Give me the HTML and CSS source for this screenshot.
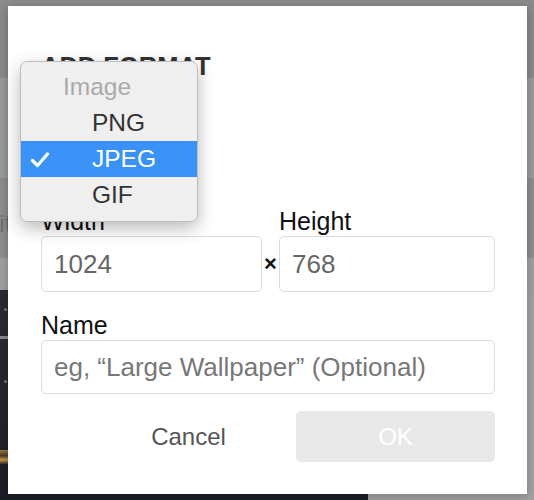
FILE: index.html
```html
<!DOCTYPE html>
<html>
<head>
<meta charset="utf-8">
<link rel="stylesheet" href="styles.css">
</head>
<body>
<div class="page">
  <div class="band band-top"></div>
  <div class="band band-toolbar"></div>
  <div class="band band-mid"><span class="peek">Edit</span></div>
  <div class="band band-light"></div>
  <div class="lower">
    <div class="photo">
      <div class="dot dot1"></div>
      <div class="streak"></div>
      <div class="dot dot2"></div>
      <div class="glow"></div>
    </div>
    <div class="rest"></div>
  </div>
</div>

<div class="dialog">
  <h1 class="title">ADD FORMAT</h1>
  <div class="size-row">
    <div class="field">
      <label class="label">Width</label>
      <input class="input" type="text" value="1024">
    </div>
    <span class="times">&times;</span>
    <div class="field">
      <label class="label">Height</label>
      <input class="input" type="text" value="768">
    </div>
  </div>
  <div class="field name-field">
    <label class="label">Name</label>
    <input class="input" type="text" placeholder="eg, “Large Wallpaper” (Optional)">
  </div>
  <div class="actions">
    <button class="btn btn-cancel">Cancel</button>
    <button class="btn btn-ok">OK</button>
  </div>
</div>

<div class="menu">
  <div class="menu-header">Image</div>
  <div class="menu-item">PNG</div>
  <div class="menu-item selected">
    <svg class="check" width="20" height="16" viewBox="0 0 20 16"><path d="M2.5 8.5 L7.5 13.5 L17.5 2" fill="none" stroke="#fff" stroke-width="3.2" stroke-linecap="round" stroke-linejoin="round"/></svg>
    JPEG
  </div>
  <div class="menu-item">GIF</div>
</div>
</body>
</html>
```

FILE: styles.css
```css
* { box-sizing: border-box; }
html, body {
  margin: 0;
  padding: 0;
  width: 534px;
  height: 500px;
  overflow: hidden;
  font-family: "Liberation Sans", Arial, Helvetica, sans-serif;
}
body { background: #8c8c8c; position: relative; }

.page { width: 534px; height: 500px; display: flex; flex-direction: column; }
.band { width: 100%; }
.band-top { height: 78px; background: #8b8b8b; }
.band-toolbar { height: 100px; background: #9c9c9c; }
.band-mid { height: 80px; background: #8f8f8f; position: relative; overflow: hidden; }
.band-light { height: 32px; background: #a1a1a1; }
.lower { flex: 1; display: flex; }
.photo {
  width: 368px;
  background: linear-gradient(180deg, #2c2c38 0%, #25252f 60%, #1d1d27 100%);
  position: relative;
}
.rest { flex: 1; background: #a2a2a2; }

.peek {
  display: block;
  margin: 32px 0 0 -30px;
  font-size: 24px;
  color: #6f6f6f;
}
.dot { position: absolute; left: 4px; width: 3px; height: 3px; background: #777; border-radius: 50%; }
.dot1 { top: 18px; }
.dot2 { top: 90px; }
.streak { position: absolute; left: 0; top: 46px; width: 8px; height: 3px; background: #8a8a8e; }
.glow {
  position: absolute; left: 0; top: 160px; width: 8px; height: 14px;
  background: linear-gradient(180deg, #9b7a3a 0%, #4a3a2a 40%, #c49a45 70%, #3a2d2a 100%);
}

.dialog {
  position: absolute;
  left: 8px;
  top: 6px;
  width: 519px;
  height: 488px;
  background: #fff;
  padding: 45px 32px 0 33px;
  box-shadow: 0 2px 10px rgba(0,0,0,0.25);
  display: flex;
  flex-direction: column;
}
.title {
  margin: 0;
  font-size: 25.5px;
  line-height: 30px;
  font-weight: bold;
  color: #333;
}
.size-row {
  margin-top: 126px;
  display: grid;
  grid-template-columns: 221px 17px 1fr;
  align-items: end;
}
.field { display: flex; flex-direction: column; }
.label {
  font-size: 25px;
  line-height: 28px;
  color: #111;
  margin-bottom: 1px;
}
.input {
  height: 56px;
  width: 100%;
  border: 1px solid #dcdcdc;
  border-radius: 5px;
  padding: 0 12px;
  font-family: inherit;
  font-size: 26px;
  color: #666;
  background: #fff;
  outline: none;
}
.input::placeholder { color: #777; }
.times {
  height: 56px;
  display: flex;
  align-items: center;
  justify-content: center;
  font-size: 22px;
  font-weight: bold;
  color: #111;
}
.name-field { margin-top: 19px; }
.name-field .input { height: 54px; }

.actions {
  margin-top: 17px;
  display: flex;
  justify-content: flex-end;
  gap: 8px;
}
.btn {
  width: 199px;
  height: 51px;
  border: none;
  border-radius: 5px;
  font-family: inherit;
  font-size: 24px;
  background: transparent;
  padding: 0;
}
.btn-cancel { color: #555; }
.btn-ok { background: #e8e8e8; color: #fff; }

.menu {
  position: absolute;
  left: 20px;
  top: 61px;
  width: 178px;
  height: 161px;
  background: #efefef;
  border: 1px solid #bdbdbd;
  border-radius: 7px;
  box-shadow: 0 6px 18px rgba(0,0,0,0.28);
  padding: 7px 0 9px;
  font-size: 24.5px;
  color: #333;
}
.menu-header {
  height: 36px;
  line-height: 36px;
  padding-left: 42px;
  color: #aaa;
}
.menu-item {
  height: 36px;
  line-height: 36px;
  padding-left: 71px;
  position: relative;
}
.menu-item.selected { background: #3a91f6; color: #fff; }
.check { position: absolute; left: 9px; top: 11px; }
```
